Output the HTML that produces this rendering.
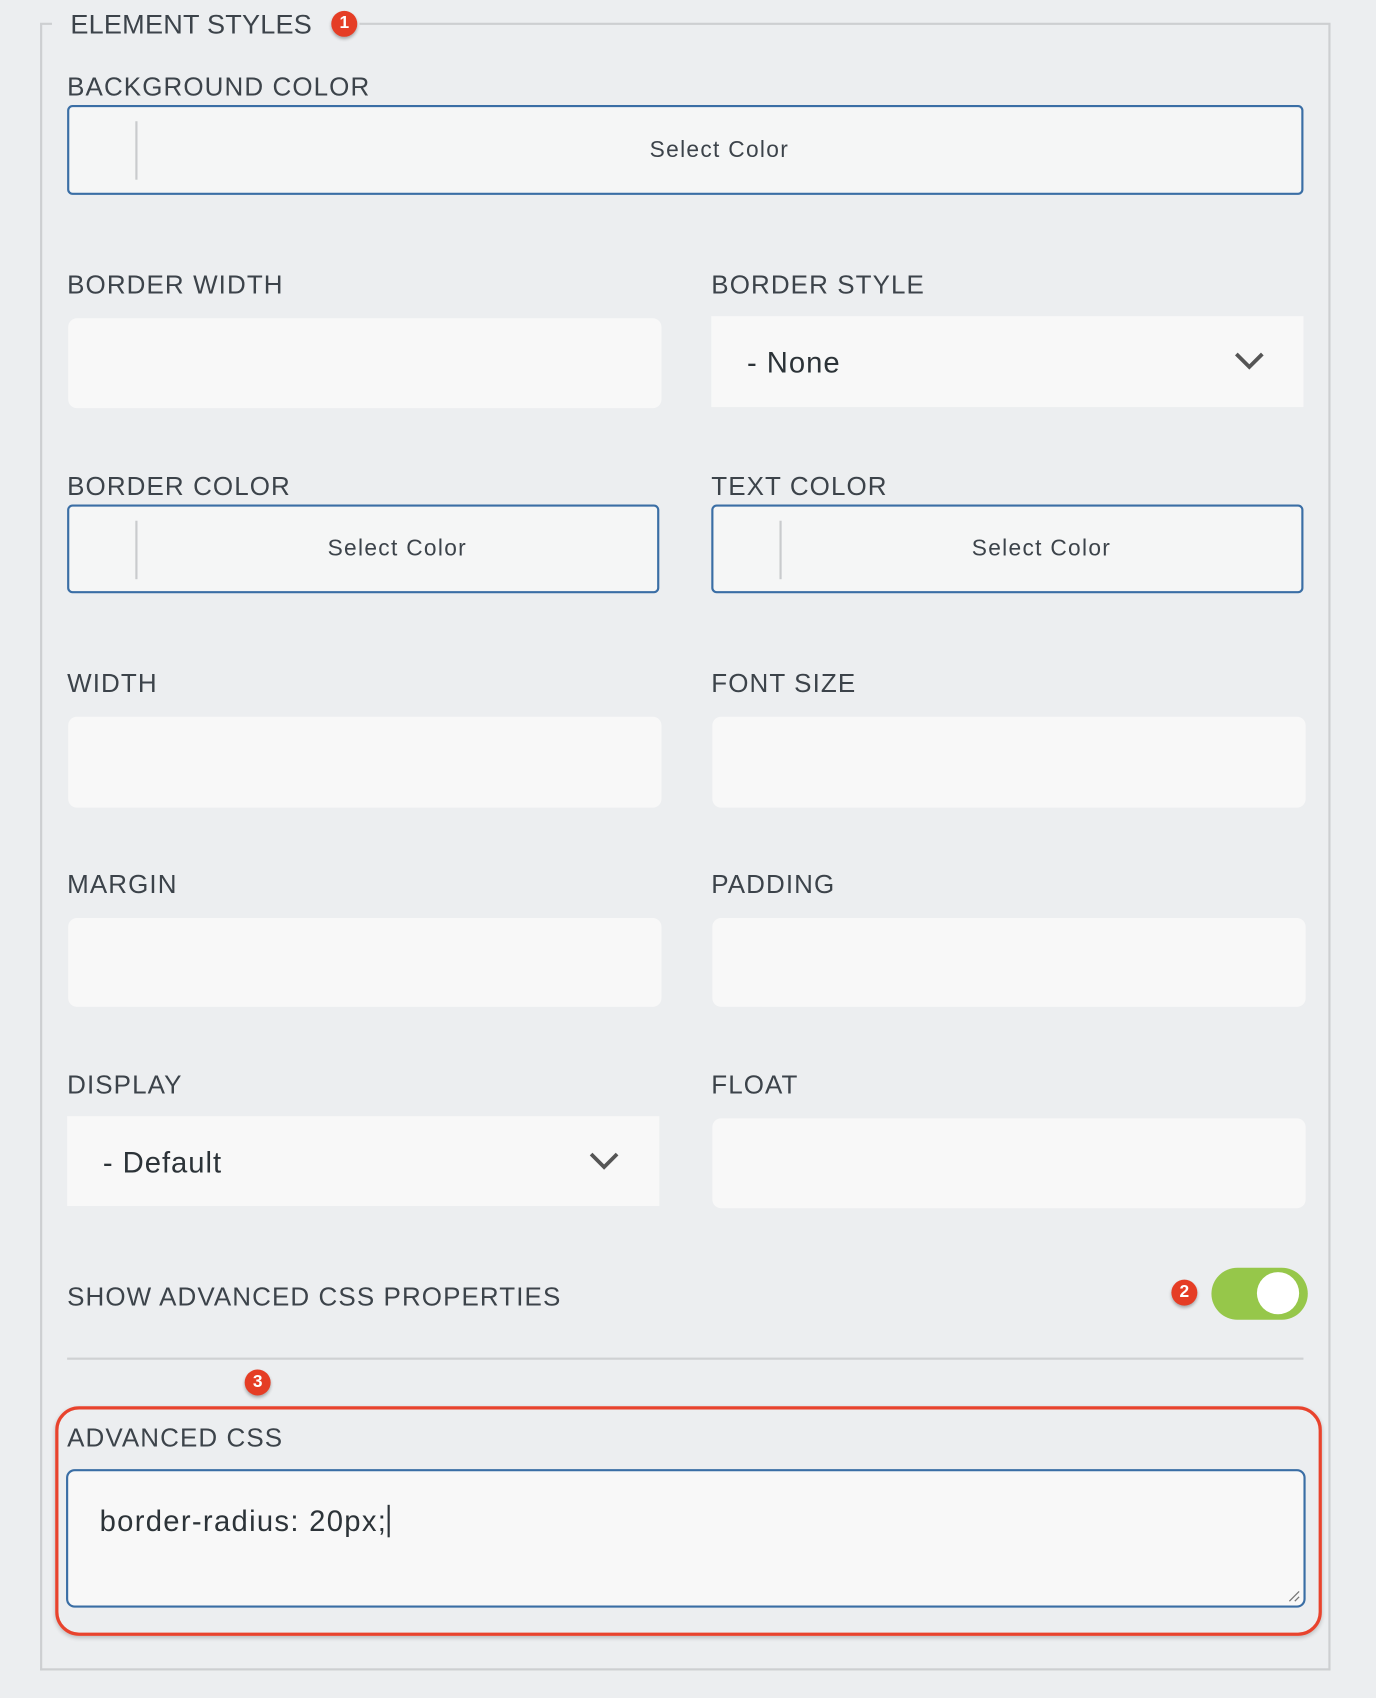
<!DOCTYPE html>
<html><head><meta charset="utf-8"><style>
html,body{margin:0;padding:0;background:#eceef0;width:1376px;height:1698px;overflow:hidden}
#w{position:absolute;left:0;top:0;width:1271px;height:1568px;transform:scale(1.08261);transform-origin:0 0;font-family:"Liberation Sans",sans-serif;color:#3c434a}
.a{position:absolute}
.lbl{position:absolute;font-size:24px;line-height:24px;white-space:nowrap;letter-spacing:1px}
.inp{position:absolute;background:#f8f8f8;border-radius:8px}
.col{position:absolute;background:#f5f6f6;border:2px solid #3a6ea5;border-radius:5px;box-sizing:border-box}
.col .d{position:absolute;left:61px;top:13px;width:2px;height:54px;background:#c9cbcd}
.col .t{position:absolute;left:63px;right:0;top:0;bottom:0;display:flex;align-items:center;justify-content:center;font-size:21px;color:#3c434a;letter-spacing:1.2px}
.sel{position:absolute;background:#f8f8f8}
.sel span{position:absolute;left:33px;top:28px;font-size:27px;color:#2c3338;letter-spacing:0.9px}
.badge{position:absolute;width:24px;height:24px;border-radius:50%;background:#e53d25;color:#fff;font-size:16px;font-weight:bold;text-align:center;line-height:24px;box-shadow:0 2px 3px rgba(0,0,0,.3)}
</style></head><body><div id="w">
<div class="a" style="left:37px;top:22px;width:1192px;height:1521px;border:2px solid #cdcfd1;border-top:none;box-sizing:border-box"></div>
<div class="a" style="left:37px;top:21px;width:11px;height:2px;background:#cdcfd1"></div>
<div class="a" style="left:332px;top:21px;width:897px;height:2px;background:#cdcfd1"></div>
<div class="lbl" style="left:65px;top:11px;font-size:25px;line-height:25px;letter-spacing:0.2px">ELEMENT STYLES</div>
<div class="badge" style="left:306px;top:10px">1</div>

<div class="lbl" style="left:62px;top:69px">BACKGROUND COLOR</div>
<div class="col" style="left:62px;top:97px;width:1142px;height:83px"><div class="d"></div><div class="t">Select Color</div></div>

<div class="lbl" style="left:62px;top:252px">BORDER WIDTH</div>
<div class="inp" style="left:63px;top:294px;width:548px;height:83px"></div>
<div class="lbl" style="left:657px;top:252px">BORDER STYLE</div>
<div class="sel" style="left:657px;top:292px;width:547px;height:84px"><span>- None</span>
<svg class="a" style="left:482px;top:32px" width="30" height="18" viewBox="0 0 30 18"><path d="M3 3 L15 15 L27 3" fill="none" stroke="#555" stroke-width="3.5"/></svg></div>

<div class="lbl" style="left:62px;top:438px">BORDER COLOR</div>
<div class="col" style="left:62px;top:466px;width:547px;height:82px"><div class="d"></div><div class="t">Select Color</div></div>
<div class="lbl" style="left:657px;top:438px">TEXT COLOR</div>
<div class="col" style="left:657px;top:466px;width:547px;height:82px"><div class="d"></div><div class="t">Select Color</div></div>

<div class="lbl" style="left:62px;top:620px">WIDTH</div>
<div class="inp" style="left:63px;top:662px;width:548px;height:84px"></div>
<div class="lbl" style="left:657px;top:620px">FONT SIZE</div>
<div class="inp" style="left:658px;top:662px;width:548px;height:84px"></div>

<div class="lbl" style="left:62px;top:806px">MARGIN</div>
<div class="inp" style="left:63px;top:848px;width:548px;height:82px"></div>
<div class="lbl" style="left:657px;top:806px">PADDING</div>
<div class="inp" style="left:658px;top:848px;width:548px;height:82px"></div>

<div class="lbl" style="left:62px;top:991px">DISPLAY</div>
<div class="sel" style="left:62px;top:1031px;width:547px;height:83px"><span>- Default</span>
<svg class="a" style="left:481px;top:32px" width="30" height="18" viewBox="0 0 30 18"><path d="M3 3 L15 15 L27 3" fill="none" stroke="#555" stroke-width="3.5"/></svg></div>
<div class="lbl" style="left:657px;top:991px">FLOAT</div>
<div class="inp" style="left:658px;top:1033px;width:548px;height:83px"></div>

<div class="lbl" style="left:62px;top:1187px">SHOW ADVANCED CSS PROPERTIES</div>
<div class="badge" style="left:1082px;top:1182px">2</div>
<div class="a" style="left:1119px;top:1171px;width:89px;height:48px;border-radius:24px;background:#96c74a"></div>
<div class="a" style="left:1161px;top:1175px;width:39px;height:39px;border-radius:50%;background:#fff"></div>

<div class="a" style="left:62px;top:1254px;width:1142px;height:2px;background:#cfd1d3"></div>
<div class="badge" style="left:226px;top:1265px">3</div>

<div class="a" style="left:51px;top:1299px;width:1170px;height:212px;border:3px solid #e8432d;border-radius:22px;box-sizing:border-box;box-shadow:0 2px 4px rgba(0,0,0,.2)"></div>
<div class="lbl" style="left:62px;top:1317px">ADVANCED CSS</div>
<div class="a" style="left:61px;top:1357px;width:1145px;height:128px;border:2px solid #3a6ea5;border-radius:8px;background:#f8f8f8;box-sizing:border-box">
<div class="a" style="left:29px;top:31px;font-size:27px;color:#2c3338;white-space:nowrap;letter-spacing:1.2px">border-radius: 20px;<span style="display:inline-block;width:2px;height:30px;background:#2c3338;vertical-align:-6px"></span></div>
<svg class="a" style="right:3px;bottom:3px" width="12" height="12"><path d="M11 2 L2 11 M11 7 L7 11" stroke="#777" stroke-width="1.2"/></svg>
</div>
</div></body></html>
